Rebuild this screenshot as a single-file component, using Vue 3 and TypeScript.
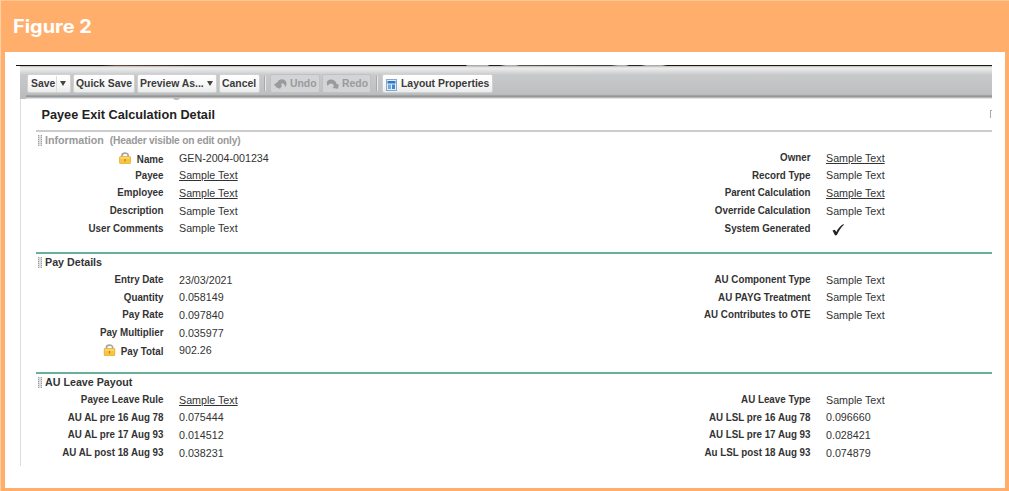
<script setup lang="ts">
interface Field {
  label: string
  value: string
  link?: boolean
  lock?: boolean
  check?: boolean
}
interface Section {
  title: string
  muted?: boolean
  size: string
  left: Field[]
  right: Field[]
}

const sample = 'Sample Text'
const sections: Section[] = [
  {
    title: 'Information',
    muted: true,
    size: 'tall',
    left: [
      { label: 'Name', value: 'GEN-2004-001234', lock: true },
      { label: 'Payee', value: sample, link: true },
      { label: 'Employee', value: sample, link: true },
      { label: 'Description', value: sample },
      { label: 'User Comments', value: sample },
    ],
    right: [
      { label: 'Owner', value: sample, link: true },
      { label: 'Record Type', value: sample },
      { label: 'Parent Calculation', value: sample, link: true },
      { label: 'Override Calculation', value: sample },
      { label: 'System Generated', value: '', check: true },
    ],
  },
  {
    title: 'Pay Details',
    size: 'medium',
    left: [
      { label: 'Entry Date', value: '23/03/2021' },
      { label: 'Quantity', value: '0.058149' },
      { label: 'Pay Rate', value: '0.097840' },
      { label: 'Pay Multiplier', value: '0.035977' },
      { label: 'Pay Total', value: '902.26', lock: true },
    ],
    right: [
      { label: 'AU Component Type', value: sample },
      { label: 'AU PAYG Treatment', value: sample },
      { label: 'AU Contributes to OTE', value: sample },
    ],
  },
  {
    title: 'AU Leave Payout',
    size: 'last',
    left: [
      { label: 'Payee Leave Rule', value: sample, link: true },
      { label: 'AU AL pre 16 Aug 78', value: '0.075444' },
      { label: 'AU AL pre 17 Aug 93', value: '0.014512' },
      { label: 'AU AL post 18 Aug 93', value: '0.038231' },
    ],
    right: [
      { label: 'AU Leave Type', value: sample },
      { label: 'AU LSL pre 16 Aug 78', value: '0.096660' },
      { label: 'AU LSL pre 17 Aug 93', value: '0.028421' },
      { label: 'Au LSL post 18 Aug 93', value: '0.074879' },
    ],
  },
]
</script>

<template>
  <div class="figure">
    <header class="caption"><span>Figure 2</span></header>
    <main class="body">
      <div class="strip"></div>
      <div class="editor">
        <nav class="toolbar">
          <button class="btn save">Save<span class="split"></span><i class="caret"></i></button>
          <button class="btn quick">Quick Save</button>
          <button class="btn preview">Preview As...<i class="caret"></i></button>
          <button class="btn cancel">Cancel</button>
          <span class="divider"></span>
          <button class="btn off undo">
            <svg width="13" height="12" viewBox="0 0 13 12"><path d="M0 6.4 L3.6 4 C5 .6 10 .3 12 3.6 C13 6 12.4 8 11 9.2 C11 6.2 9.4 4.6 7.2 5.8 L7.8 8 L6 10.8 L2.6 9.4Z" /></svg>Undo
          </button>
          <button class="btn off redo">
            <svg width="13" height="12" viewBox="0 0 13 12"><path d="M12.8 6.2 L12 10.8 L6.6 10 L8 8 C6.8 4.8 3.5 4.7 1.8 8 C-.6 4.4 1.6 1.5 5 1.5 C8 1.5 9.8 3 10.8 6.2Z" /></svg>Redo
          </button>
          <span class="divider second"></span>
          <button class="btn layout">
            <svg width="11" height="12" viewBox="0 0 11 12">
              <rect x=".5" y=".5" width="10" height="11" fill="#dcecfb" stroke="#8ba8c5" />
              <rect x="1.5" y="2" width="8" height="2.5" fill="#2f76c8" />
              <rect x="2" y="5.5" width="3" height="4.5" fill="#72acdf" />
              <rect x="6" y="5.5" width="3" height="4.5" fill="#3f87cf" />
            </svg>Layout Properties
          </button>
          <i class="corner"></i>
          <i class="notch"></i>
        </nav>
        <div class="sheet">
          <div class="heading"><h1>Payee Exit Calculation Detail</h1><span class="edge"></span></div>
          <section v-for="s in sections" :key="s.title" :class="['section', s.size, { muted: s.muted }]">
            <h2><i class="grip"></i>{{ s.title }}<span v-if="s.muted" class="note">(Header visible on edit only)</span></h2>
            <div class="columns">
              <div v-for="(fields, side) in [s.left, s.right]" :key="side" class="column">
                <div v-for="f in fields" :key="f.label" :class="['row', { locked: f.lock }]">
                  <span class="label">
                    <svg v-if="f.lock" class="lock" width="13" height="12" viewBox="0 0 11 12" preserveAspectRatio="none">
                      <path d="M2.6 6V3.7C2.6.2 8.4.2 8.4 3.7V6" fill="none" stroke="#aaa79c" stroke-width="1.6" />
                      <rect x=".4" y="4.6" width="10.2" height="7" rx=".8" fill="#f8c53c" stroke="#e3ad3c" stroke-width=".8" />
                      <path d="M1.3 5.9H9.7" stroke="#ffe694" />
                      <path d="M5.5 7V9.5" stroke="#b98322" stroke-width="1.2" />
                    </svg>
                    <span class="name">{{ f.label }}</span>
                  </span>
                  <span class="value">
                    <svg v-if="f.check" class="check" width="14" height="14" viewBox="0 0 14 14"><path d="M1.5 7.6 L3.8 6.7 L5.3 8.9 C7 5.5 9.2 3 12.5 1 L12.9 1.7 C9.8 4.5 7.7 8 5.9 12 L4.1 12.4Z" fill="#222" /></svg>
                    <span v-else :class="{ link: f.link }">{{ f.value }}</span>
                  </span>
                </div>
              </div>
            </div>
          </section>
        </div>
      </div>
    </main>
  </div>
</template>

<style>
body { margin: 0; overflow: hidden; }
</style>

<style scoped>
.figure {
  box-sizing: border-box;
  width: 1009px;
  height: 491px;
  background: #ffae6b;
  border-top: 1px solid #ffc796;
  border-left: 1px solid #ffd0a6;
  padding: 0 4px 3px;
  font-family: "Liberation Sans", Arial, sans-serif;
  color: #333;
}
.caption {
  height: 51px;
  box-sizing: border-box;
  padding: 0 0 0 8px;
  font: 700 18.3px/51px Inter, "Open Sans", sans-serif;
  color: #fff;
}
.caption span { display: inline-block; transform: scaleX(1.09); transform-origin: left; }
.body {
  height: 436px;
  box-sizing: border-box;
  padding: 13px 13px 0 11px;
  background: #fff;
}
.strip {
  height: 1px;
  background: linear-gradient(90deg, #17100e 0 85px, #6b4638 100px, #17100e 200px 450px, #aaa 451px 472px, #222 473px 484px, #aaa 490px 500px, #5c5450 503px, #403b3a 580px 595px, #aaa 602px 610px, #292524 613px 625px, #aaa 630px 646px, #20150f 651px, #171b13 100%);
}
.editor { margin-left: 4px; }
.toolbar {
  position: relative;
  height: 33px;
  box-sizing: border-box;
  padding: 8px 0 0 7px;
  display: flex;
  align-items: flex-start;
  background: linear-gradient(#b9b9b8 0, #eeeeee 2px, #e4e4e5 4px, #c7c9ca 9px, #bdbfc0 28px, #b5b6b7 29px, #8c8e8f 30px, #9b9d9e 31px, #d6d6d6 32px, #eee 33px);
}
.corner { position: absolute; left: 0; top: 28px; width: 6px; height: 5px; background: #babcbd; }
.notch { position: absolute; left: 153px; top: 31px; width: 7px; height: 3px; border-radius: 0 0 4px 4px; background: #bbb; }
.btn {
  box-sizing: border-box;
  height: 19px;
  padding: 0 0 0 4px;
  border: 1px solid #d0d1d1;
  border-radius: 2px;
  background: linear-gradient(#fff, #f8f8f8 55%, #eaebeb);
  font: 700 10.4px/17px "Liberation Sans", Arial, sans-serif;
  color: #3b3b3b;
  display: flex;
  align-items: center;
  white-space: nowrap;
}
.save { width: 44px; margin-right: 2px; padding-left: 3px; }
.quick { width: 62px; margin-right: 2px; padding-left: 2px; }
.preview { width: 80px; margin-right: 2px; padding-left: 2px; }
.cancel { width: 41px; padding-left: 2px; }
.split { width: 1px; height: 16px; background: #ddd; margin: 0 3px 0 1px; }
.caret {
  width: 0;
  height: 0;
  border: 3px solid transparent;
  border-top: 5px solid #444;
  border-bottom: 0;
}
.preview .caret { margin-left: 3px; }
.divider { width: 1px; height: 15px; margin: 2px 4px 0 5px; background: #e8e8e8; box-shadow: -1px 0 #aaa; }
.second { margin: 2px 4px 0 6px; }
.off { background: #d3d4d5; border-color: #bfc1c2; color: #999b9c; }
.off svg { fill: #999b9c; margin-right: 3px; }
.undo { width: 50px; margin-right: 2px; padding-left: 3px; }
.redo { width: 49px; padding-left: 3px; }
.layout { width: 111px; padding-left: 3px; }
.layout svg { margin-right: 4px; position: relative; top: 1px; }
.sheet {
  height: 367px;
  box-sizing: border-box;
  border-left: 1px solid #ddd;
  padding-left: 15px;
}
.heading { height: 31px; display: flex; justify-content: space-between; }
h1 { margin: 0; padding-left: 5.5px; font-size: 12.7px; line-height: 32px; color: #222; }
.edge { width: 2px; height: 8px; margin-top: 11px; border-left: 1px solid #aaa; border-top: 1px solid #aaa; box-sizing: border-box; }
.section { border-top: 2px solid #68b29c; box-sizing: border-box; }
.muted { border-top-color: #ccc; }
.tall { height: 122px; }
.medium { height: 120px; }
h2 {
  margin: 0;
  height: 17px;
  display: flex;
  align-items: center;
  font-size: 10.7px;
  line-height: 17px;
  color: #333;
}
.muted h2 { color: #999; }
.note { margin-left: 6px; font-size: 10.2px; letter-spacing: -.18px; }
.grip {
  width: 4px;
  height: 11px;
  box-sizing: border-box;
  margin: 0 3px 0 2px;
  border: dotted #999;
  border-width: 0 1px;
  background: #ddd;
}
.columns { display: grid; grid-template-columns: 647px 1fr; }
.column { display: flex; flex-direction: column; }
.row { height: 17.6px; display: flex; align-items: center; font-size: 10.7px; line-height: 17px; white-space: nowrap; }
.label { width: 127.5px; margin-right: 15.5px; display: flex; justify-content: flex-end; font-weight: 700; transform: scaleX(.915); transform-origin: right; }
.value { margin-top: 1px; }
.locked .label { margin-top: 3px; }
.locked .name { margin-left: 6px; }
.lock { margin-top: 1px; }
.link { text-decoration: underline; text-underline-offset: 1px; }
.check { display: block; margin: 2px 0 0 5px; }
</style>
